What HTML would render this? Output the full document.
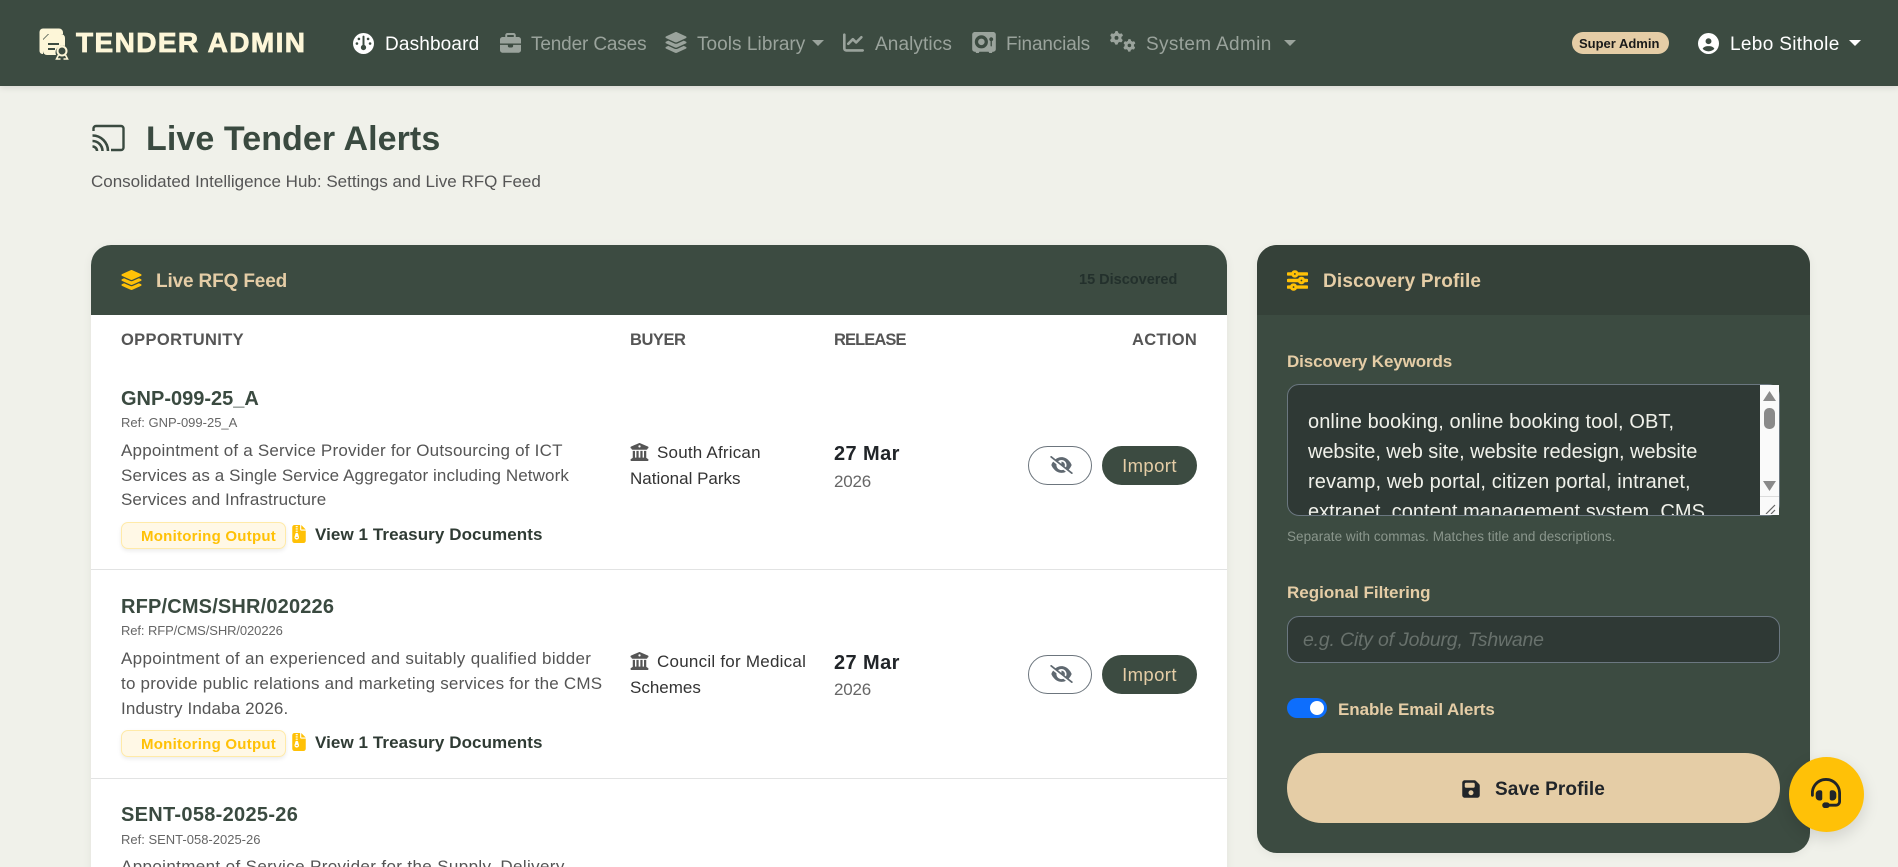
<!DOCTYPE html>
<html lang="en"><head><meta charset="utf-8"><title>Live Tender Alerts</title>
<style>
*{box-sizing:border-box;margin:0;padding:0}
html,body{width:1898px;height:867px;overflow:hidden;background:#f0f1ea;font-family:"Liberation Sans",Arial,sans-serif}
body{position:relative}
.t{position:absolute;white-space:nowrap;line-height:24px;height:24px}
svg{position:absolute;display:block;fill:currentColor}
.box{position:absolute}
header{position:absolute;left:0;top:0;width:1898px;height:86px;background:#3c4b41;box-shadow:0 2px 6px rgba(0,0,0,.1)}
.nav{font-size:19px;color:#9aa39c}
.navi{color:#9aa39c}
.caret{position:absolute;width:0;height:0;border-left:6px solid transparent;border-right:6px solid transparent;border-top:6px solid #9aa39c}
.th{font-size:16.5px;font-weight:700;color:#555}
.rt{font-size:20px;font-weight:700;color:#3a4a40}
.ref{font-size:13px;color:#666}
.d{font-size:17px;color:#555;letter-spacing:.08px}
.badge{position:absolute;left:121px;width:165px;height:27px;background:#fff8e6;border:1px solid #ffeaa8;border-radius:7px;box-shadow:0 2px 4px rgba(0,0,0,.08)}
.mo{font-size:15px;font-weight:700;color:#ffc107;letter-spacing:.25px}
.vd{font-size:17px;font-weight:700;color:#2f3b34;letter-spacing:.08px}
.b{font-size:17px;color:#333}
.dm{font-size:20px;font-weight:700;color:#212529;letter-spacing:.4px}
.yr{font-size:17px;color:#666;letter-spacing:-.2px}
.eye{position:absolute;left:1028px;width:64px;height:39px;border:1px solid #6c757d;border-radius:20px;background:#fff}
.imp{position:absolute;left:1102px;width:95px;height:39px;border-radius:20px;background:#3c4b41;color:#e5cda6;font-size:18.5px;letter-spacing:.4px;line-height:39px;text-align:center}
.lab{font-size:17px;font-weight:700;color:#e5cda6}
.kw{font-size:20px;color:#f0f1ea;height:30px;line-height:30px}
</style></head><body>

<header></header>
<svg style="left:38px;top:27px" width="31" height="33" viewBox="0 0 31 33">
<path d="M5 1.500H21a4 4 0 0 1 4 4V7H10L5 12V27H4.500a3 3 0 0 1-3-3V5a3.500 3.500 0 0 1 3.500-3.500z" fill="#fdf6d8"/>
<path d="M11 7H23a4 4 0 0 1 4 4V19a7 7 0 0 0-9 9H9a4 4 0 0 1-4-4V13z" fill="#fdf6d8"/>
<path d="M10 17H21M10 22H17" stroke="#3c4b41" stroke-width="2" fill="none"/>
<circle cx="24" cy="24" r="4.500" fill="none" stroke="#fdf6d8" stroke-width="2"/>
<path d="M20.500 28L18.500 32H22.500M27.500 28L29.500 32H25.500" fill="none" stroke="#fdf6d8" stroke-width="1.600"/>
</svg>
<span class="t" style="left:76px;top:30px;height:26px;line-height:26px;font-size:28px;font-weight:700;color:#fdf6d8;letter-spacing:1.400px;-webkit-text-stroke:.8px #fdf6d8">TENDER ADMIN</span>

<svg style="left:353px;top:33px;color:#fff" width="21" height="21" viewBox="0 0 512 512"><path d="M0 256a256 256 0 1 1 512 0A256 256 0 1 1 0 256zm320 96c0-26.900-16.500-49.900-40-59.300V88c0-13.300-10.700-24-24-24s-24 10.700-24 24V292.700c-23.500 9.500-40 32.500-40 59.300c0 35.300 28.700 64 64 64s64-28.700 64-64zM144 176a32 32 0 1 0 0-64 32 32 0 1 0 0 64zm-16 80a32 32 0 1 0 -64 0 32 32 0 1 0 64 0zm288 32a32 32 0 1 0 0-64 32 32 0 1 0 0 64zM400 144a32 32 0 1 0 -64 0 32 32 0 1 0 64 0z"/></svg>
<span class="t nav" style="left:385px;top:33px;color:#fff;letter-spacing:.15px">Dashboard</span>

<svg class="navi" style="left:500px;top:33px" width="21" height="21" viewBox="0 0 512 512"><path d="M184 48H328c4.400 0 8 3.600 8 8V96H176V56c0-4.400 3.600-8 8-8zm-56 8V96H64C28.700 96 0 124.700 0 160v96H192 320 512V160c0-35.300-28.700-64-64-64H384V56c0-30.900-25.100-56-56-56H184c-30.900 0-56 25.100-56 56zM512 288H320v32c0 17.700-14.300 32-32 32H224c-17.700 0-32-14.300-32-32V288H0V416c0 35.300 28.700 64 64 64H448c35.300 0 64-28.700 64-64V288z"/></svg>
<span class="t nav" style="left:531px;top:33px;letter-spacing:-.15px">Tender Cases</span>

<svg class="navi" style="left:664px;top:32px" width="24" height="21" viewBox="0 0 576 512"><path d="M264.500 5.200c14.900-6.900 32.100-6.900 47 0l218.600 101c8.500 3.900 13.900 12.400 13.900 21.800s-5.400 17.900-13.900 21.800l-218.600 101c-14.900 6.900-32.100 6.900-47 0L45.900 149.800C37.400 145.800 32 137.300 32 128s5.400-17.900 13.900-21.800L264.500 5.200zM476.900 209.600l53.200 24.600c8.500 3.900 13.900 12.400 13.900 21.800s-5.400 17.900-13.900 21.800l-218.600 101c-14.900 6.900-32.100 6.900-47 0L45.900 277.800C37.400 273.800 32 265.300 32 256s5.400-17.900 13.900-21.800l53.200-24.600 152 70.200c23.400 10.800 50.400 10.800 73.800 0l152-70.200zm-152 198.200l152-70.200 53.200 24.600c8.500 3.900 13.900 12.400 13.900 21.800s-5.400 17.900-13.900 21.800l-218.600 101c-14.900 6.900-32.100 6.900-47 0L45.900 405.800C37.400 401.800 32 393.300 32 384s5.400-17.900 13.900-21.800l53.200-24.600 152 70.200c23.400 10.800 50.400 10.800 73.800 0z"/></svg>
<span class="t nav" style="left:697px;top:33px;letter-spacing:.05px">Tools Library</span>
<i class="caret" style="left:812px;top:40px"></i>

<svg class="navi" style="left:843px;top:32px" width="21" height="21" viewBox="0 0 512 512"><path d="M64 64c0-17.700-14.300-32-32-32S0 46.300 0 64V400c0 44.200 35.800 80 80 80H480c17.700 0 32-14.300 32-32s-14.300-32-32-32H80c-8.800 0-16-7.200-16-16V64zm406.600 86.600c12.500-12.500 12.500-32.800 0-45.300s-32.800-12.500-45.300 0L320 210.700l-57.400-57.400c-12.500-12.500-32.800-12.500-45.300 0l-112 112c-12.500 12.500-12.500 32.800 0 45.300s32.800 12.500 45.300 0L240 221.300l57.400 57.400c12.500 12.500 32.800 12.500 45.300 0l128-128z"/></svg>
<span class="t nav" style="left:875px;top:33px;letter-spacing:.1px">Analytics</span>

<svg class="navi" style="left:972px;top:32px" width="24" height="21" viewBox="0 0 576 512"><path d="M64 0C28.700 0 0 28.700 0 64V416c0 35.300 28.700 64 64 64H80l16 32h64l16-32H400l16 32h64l16-32h16c35.300 0 64-28.700 64-64V64c0-35.300-28.700-64-64-64H64zM224 320a80 80 0 1 0 0-160 80 80 0 1 0 0 160zm0-240a160 160 0 1 1 0 320 160 160 0 1 1 0-320zM480 221.300V336c0 8.800-7.200 16-16 16s-16-7.200-16-16V221.300c-18.600-6.600-32-24.400-32-45.300c0-26.500 21.500-48 48-48s48 21.500 48 48c0 20.900-13.400 38.700-32 45.300z"/></svg>
<span class="t nav" style="left:1006px;top:33px;letter-spacing:-.15px">Financials</span>

<svg class="navi" style="left:1110px;top:31px" width="26" height="21" viewBox="0 0 640 512">
<path d="M308.500 135.300c7.100-6.300 9.900-16.200 6.200-25c-2.300-5.300-4.800-10.500-7.600-15.500L304 89.400c-3-5-6.300-9.900-9.800-14.600c-5.700-7.600-15.700-10.100-24.700-7.100l-28.200 9.300c-10.700-8.800-23-16-36.200-20.900L198 27.100c-1.900-9.300-9.100-16.700-18.500-17.800C173.900 8.400 168.200 8 162.400 8h-.7c-5.800 0-11.500 .4-17.100 1.200c-9.400 1.200-16.600 8.600-18.500 17.900L120 56.100c-13.300 5-25.500 12.100-36.200 20.900L55.500 67.800c-9-3-19-.5-24.700 7.100c-3.500 4.700-6.800 9.600-9.900 14.600l-3 5.300c-2.800 5-5.300 10.200-7.600 15.600c-3.700 8.700-.9 18.600 6.200 25l22.200 19.800C32.600 161.900 32 168.900 32 176s.6 14.100 1.700 20.900L11.500 216.700c-7.100 6.300-9.900 16.200-6.200 25c2.300 5.300 4.800 10.500 7.600 15.600l3 5.200c3 5.100 6.300 9.900 9.900 14.600c5.700 7.600 15.700 10.100 24.700 7.100l28.200-9.300c10.700 8.800 23 16 36.200 20.900l6.100 29.100c1.900 9.300 9.100 16.700 18.500 17.800c5.700 .7 11.500 1.100 17.400 1.100s11.700-.4 17.400-1.100c9.400-1.200 16.600-8.600 18.500-17.800l6.100-29.100c13.300-5 25.500-12.100 36.200-20.900l28.200 9.300c9 3 19 .5 24.700-7.100c3.500-4.700 6.800-9.500 9.800-14.600l3.100-5.400c2.800-5 5.300-10.200 7.600-15.500c3.700-8.700 .9-18.600-6.200-25l-22.200-19.800c1.100-6.800 1.700-13.800 1.700-20.900s-.6-14.100-1.700-20.900l22.200-19.800zM112 176a48 48 0 1 1 96 0 48 48 0 1 1 -96 0z" transform="translate(0 -10)"/>
<path d="M308.500 135.300c7.100-6.300 9.900-16.200 6.200-25c-2.300-5.300-4.800-10.500-7.600-15.500L304 89.400c-3-5-6.300-9.900-9.800-14.600c-5.700-7.600-15.700-10.100-24.700-7.100l-28.200 9.300c-10.700-8.800-23-16-36.200-20.900L198 27.100c-1.900-9.300-9.100-16.700-18.500-17.800C173.900 8.400 168.200 8 162.400 8h-.7c-5.800 0-11.500 .4-17.100 1.200c-9.400 1.200-16.600 8.600-18.500 17.900L120 56.100c-13.300 5-25.500 12.100-36.200 20.900L55.500 67.800c-9-3-19-.5-24.700 7.100c-3.500 4.700-6.800 9.600-9.900 14.600l-3 5.300c-2.800 5-5.300 10.200-7.600 15.600c-3.700 8.700-.9 18.600 6.200 25l22.200 19.800C32.600 161.900 32 168.900 32 176s.6 14.100 1.700 20.900L11.500 216.700c-7.100 6.300-9.900 16.200-6.200 25c2.300 5.300 4.800 10.500 7.600 15.600l3 5.200c3 5.100 6.300 9.900 9.900 14.600c5.700 7.600 15.700 10.100 24.700 7.100l28.200-9.300c10.700 8.800 23 16 36.200 20.900l6.100 29.100c1.900 9.300 9.100 16.700 18.500 17.800c5.700 .7 11.500 1.100 17.400 1.100s11.700-.4 17.400-1.100c9.400-1.200 16.600-8.600 18.500-17.800l6.100-29.100c13.300-5 25.500-12.100 36.200-20.900l28.200 9.300c9 3 19 .5 24.700-7.100c3.500-4.700 6.800-9.500 9.800-14.600l3.100-5.400c2.800-5 5.300-10.200 7.600-15.500c3.700-8.700 .9-18.600-6.200-25l-22.200-19.800c1.100-6.800 1.700-13.800 1.700-20.900s-.6-14.100-1.700-20.900l22.200-19.800zM112 176a48 48 0 1 1 96 0 48 48 0 1 1 -96 0z" transform="translate(330 190) scale(.92)"/></svg>
<span class="t nav" style="left:1146px;top:33px;letter-spacing:.35px">System Admin</span>
<i class="caret" style="left:1284px;top:40px"></i>

<div class="box" style="left:1572px;top:32px;width:97px;height:22px;border-radius:11px;background:#e5cda6"></div>
<span class="t" style="left:1579px;top:32px;font-size:13px;font-weight:700;color:#1a1a1a">Super Admin</span>
<svg style="left:1698px;top:33px;color:#fff" width="21" height="21" viewBox="0 0 512 512"><path d="M399 384.200C376.900 345.800 335.400 320 288 320H224c-47.400 0-88.900 25.800-111 64.200c35.200 39.200 86.200 63.800 143 63.800s107.800-24.700 143-63.800zM0 256a256 256 0 1 1 512 0A256 256 0 1 1 0 256zm256 16a72 72 0 1 0 0-144 72 72 0 1 0 0 144z"/></svg>
<span class="t nav" style="left:1730px;top:33px;color:#fff;letter-spacing:.33px">Lebo Sithole</span>
<i class="caret" style="left:1849px;top:40px;border-top-color:#fff"></i>

<svg style="left:91px;top:124px;color:#3a4a40;fill:none" width="34" height="28" viewBox="0 0 34 28">
<path d="M2.500 7V4.500a2.500 2.500 0 0 1 2.500-2.500H30a2.500 2.500 0 0 1 2.500 2.500V23.500a2.500 2.500 0 0 1-2.500 2.500H20" fill="none" stroke="currentColor" stroke-width="2.400"/>
<path d="M1.500 11.500a15.500 15.500 0 0 1 15.500 15.500M1.500 17a10 10 0 0 1 10 10M1.500 22.500a4.500 4.500 0 0 1 4.500 4.500" fill="none" stroke="currentColor" stroke-width="2.600"/></svg>
<h1 class="t" style="left:146px;top:122px;height:34px;line-height:34px;font-size:34px;font-weight:700;color:#3a4a40;letter-spacing:.08px">Live Tender Alerts</h1>
<p class="t" style="left:91px;top:170px;font-size:17px;color:#555;letter-spacing:0">Consolidated Intelligence Hub: Settings and Live RFQ Feed</p>

<!-- left card -->
<div class="box" style="left:91px;top:245px;width:1136px;height:640px;background:#fff;border-radius:20px 20px 0 0;box-shadow:0 2px 10px rgba(0,0,0,.06)"></div>
<div class="box" style="left:91px;top:245px;width:1136px;height:70px;background:#3c4b41;border-radius:20px 20px 0 0"></div>
<svg style="left:120px;top:270px;color:#ffc107" width="23" height="20" viewBox="0 0 576 512"><path d="M264.500 5.200c14.900-6.900 32.100-6.900 47 0l218.600 101c8.500 3.900 13.900 12.400 13.900 21.800s-5.400 17.900-13.900 21.800l-218.600 101c-14.900 6.900-32.100 6.900-47 0L45.900 149.800C37.400 145.800 32 137.300 32 128s5.400-17.900 13.900-21.800L264.500 5.200zM476.900 209.600l53.200 24.600c8.500 3.900 13.900 12.400 13.900 21.800s-5.400 17.900-13.900 21.800l-218.600 101c-14.900 6.900-32.100 6.900-47 0L45.900 277.800C37.400 273.800 32 265.300 32 256s5.400-17.900 13.900-21.800l53.200-24.600 152 70.200c23.400 10.800 50.400 10.800 73.800 0l152-70.200zm-152 198.200l152-70.200 53.200 24.600c8.500 3.900 13.900 12.400 13.900 21.800s-5.400 17.900-13.900 21.800l-218.600 101c-14.900 6.900-32.100 6.900-47 0L45.900 405.800C37.400 401.800 32 393.300 32 384s5.400-17.900 13.900-21.800l53.200-24.600 152 70.200c23.400 10.800 50.400 10.800 73.800 0z"/></svg>
<span class="t" style="left:156px;top:270px;font-size:19px;font-weight:700;color:#e5cda6;letter-spacing:-.15px">Live RFQ Feed</span>
<span class="t" style="left:1079px;top:268px;font-size:14.500px;font-weight:700;color:#23302c">15 Discovered</span>

<span class="t th" style="left:121px;top:328px;letter-spacing:.35px">OPPORTUNITY</span>
<span class="t th" style="left:630px;top:328px;letter-spacing:-.45px">BUYER</span>
<span class="t th" style="left:834px;top:328px;letter-spacing:-.9px">RELEASE</span>
<span class="t th" style="left:1132px;top:328px;letter-spacing:.3px">ACTION</span>

<!-- row 1 -->
<span class="t rt" style="left:121px;top:387px;letter-spacing:0">GNP-099-25_A</span>
<span class="t ref" style="left:121px;top:411px">Ref: GNP-099-25_A</span>
<span class="t d" style="left:121px;top:439px;letter-spacing:.21px">Appointment of a Service Provider for Outsourcing of ICT</span>
<span class="t d" style="left:121px;top:464px;letter-spacing:.1px">Services as a Single Service Aggregator including Network</span>
<span class="t d" style="left:121px;top:488px">Services and Infrastructure</span>
<div class="badge" style="top:522px"></div>
<span class="t mo" style="left:141px;top:525px">Monitoring Output</span>
<svg style="left:292px;top:525px;color:#ffc107" width="14" height="18" viewBox="0 0 384 512"><path d="M64 0C28.700 0 0 28.700 0 64V448c0 35.300 28.700 64 64 64H320c35.300 0 64-28.700 64-64V160H256c-17.700 0-32-14.300-32-32V0H64zM256 0V128H384L256 0zM96 48c0-8.800 7.200-16 16-16h32c8.800 0 16 7.200 16 16s-7.200 16-16 16H112c-8.800 0-16-7.200-16-16zm0 64c0-8.800 7.200-16 16-16h32c8.800 0 16 7.200 16 16s-7.200 16-16 16H112c-8.800 0-16-7.200-16-16zm0 64c0-8.800 7.200-16 16-16h32c8.800 0 16 7.200 16 16s-7.200 16-16 16H112c-8.800 0-16-7.200-16-16zm-6.300 71.800c3.700-14 16.400-23.800 30.900-23.800h14.800c14.500 0 27.200 9.700 30.900 23.800l23.500 88.200c1.400 5.400 2.100 10.900 2.100 16.400c0 35.200-28.800 63.700-64 63.700s-64-28.500-64-63.700c0-5.500 .7-11.100 2.100-16.400l23.500-88.200zM112 336c-8.800 0-16 7.200-16 16s7.200 16 16 16h32c8.800 0 16-7.200 16-16s-7.200-16-16-16H112z"/></svg>
<span class="t vd" style="left:315px;top:523px">View 1 Treasury Documents</span>
<svg style="left:630px;top:443px;color:#555" width="19" height="18" viewBox="0 0 512 512"><path d="M243.400 2.600l-224 96c-14 6-21.800 21-18.700 35.800S16.800 160 32 160v8c0 13.300 10.700 24 24 24H456c13.300 0 24-10.700 24-24v-8c15.200 0 28.300-10.700 31.300-25.600s-4.800-29.900-18.700-35.800l-224-96c-8-3.400-17.200-3.400-25.200 0zM128 224H64V420.300c-.6 .3-1.200 .7-1.800 1.100l-48 32c-11.700 7.800-17 22.400-12.900 35.900S17.900 512 32 512H480c14.100 0 26.500-9.200 30.600-22.700s-1.100-28.100-12.900-35.900l-48-32c-.6-.4-1.200-.7-1.800-1.100V224H384V416H344V224H280V416H232V224H168V416H128V224zM256 64a32 32 0 1 1 0 64 32 32 0 1 1 0-64z"/></svg>
<span class="t b" style="left:657px;top:441px;letter-spacing:.2px">South African</span>
<span class="t b" style="left:630px;top:467px">National Parks</span>
<span class="t dm" style="left:834px;top:442px">27 Mar</span>
<span class="t yr" style="left:834px;top:470px">2026</span>
<div class="eye" style="top:446px"></div>
<svg style="left:1050px;top:456px;color:#5f6870" width="23" height="18" viewBox="0 0 640 512"><path d="M38.800 5.100C28.400-3.100 13.300-1.200 5.100 9.200S-1.200 34.700 9.200 42.900l592 464c10.400 8.200 25.500 6.300 33.700-4.100s6.300-25.500-4.100-33.700L525.600 386.700c39.600-40.600 66.400-86.100 79.900-118.400c3.300-7.900 3.300-16.700 0-24.600c-14.900-35.700-46.200-87.700-93-131.100C465.500 68.800 400.800 32 320 32c-68.200 0-125 26.300-169.300 60.800L38.800 5.100zM223.100 149.500C248.600 126.200 282.700 112 320 112c79.500 0 144 64.500 144 144c0 24.900-6.300 48.300-17.400 68.700L408 294.500c8.400-19.300 10.600-41.400 4.800-63.300c-11.100-41.500-47.800-69.400-88.600-71.100c-5.800-.2-9.200 6.100-7.400 11.700c2.100 6.400 3.300 13.200 3.300 20.300c0 10.200-2.400 19.800-6.600 28.300l-90.300-70.800zM373 389.900c-16.400 6.500-34.300 10.100-53 10.100c-79.500 0-144-64.500-144-144c0-6.900 .5-13.600 1.400-20.200L83.100 161.500C60.300 191.200 44 220.800 34.500 243.700c-3.300 7.900-3.300 16.700 0 24.600c14.900 35.700 46.200 87.700 93 131.100C174.500 443.200 239.200 480 320 480c47.800 0 89.900-12.900 126.200-32.500L373 389.900z"/></svg>
<div class="imp" style="top:446px">Import</div>
<div class="box" style="left:91px;top:569px;width:1136px;height:1px;background:#e2e3e3"></div>

<!-- row 2 -->
<span class="t rt" style="left:121px;top:595px;letter-spacing:.17px">RFP/CMS/SHR/020226</span>
<span class="t ref" style="left:121px;top:619px;letter-spacing:-.1px">Ref: RFP/CMS/SHR/020226</span>
<span class="t d" style="left:121px;top:647px;letter-spacing:.33px">Appointment of an experienced and suitably qualified bidder</span>
<span class="t d" style="left:121px;top:672px;letter-spacing:.22px">to provide public relations and marketing services for the CMS</span>
<span class="t d" style="left:121px;top:697px;letter-spacing:.14px">Industry Indaba 2026.</span>
<div class="badge" style="top:730px"></div>
<span class="t mo" style="left:141px;top:733px">Monitoring Output</span>
<svg style="left:292px;top:733px;color:#ffc107" width="14" height="18" viewBox="0 0 384 512"><path d="M64 0C28.700 0 0 28.700 0 64V448c0 35.300 28.700 64 64 64H320c35.300 0 64-28.700 64-64V160H256c-17.700 0-32-14.300-32-32V0H64zM256 0V128H384L256 0zM96 48c0-8.800 7.200-16 16-16h32c8.800 0 16 7.200 16 16s-7.200 16-16 16H112c-8.800 0-16-7.200-16-16zm0 64c0-8.800 7.200-16 16-16h32c8.800 0 16 7.200 16 16s-7.200 16-16 16H112c-8.800 0-16-7.200-16-16zm0 64c0-8.800 7.200-16 16-16h32c8.800 0 16 7.200 16 16s-7.200 16-16 16H112c-8.800 0-16-7.200-16-16zm-6.300 71.800c3.700-14 16.400-23.800 30.900-23.800h14.800c14.500 0 27.200 9.700 30.900 23.800l23.500 88.200c1.400 5.400 2.100 10.900 2.100 16.400c0 35.200-28.800 63.700-64 63.700s-64-28.500-64-63.700c0-5.500 .7-11.100 2.100-16.400l23.500-88.200zM112 336c-8.800 0-16 7.200-16 16s7.200 16 16 16h32c8.800 0 16-7.200 16-16s-7.200-16-16-16H112z"/></svg>
<span class="t vd" style="left:315px;top:731px">View 1 Treasury Documents</span>
<svg style="left:630px;top:652px;color:#555" width="19" height="18" viewBox="0 0 512 512"><path d="M243.400 2.600l-224 96c-14 6-21.800 21-18.700 35.800S16.800 160 32 160v8c0 13.300 10.700 24 24 24H456c13.300 0 24-10.700 24-24v-8c15.200 0 28.300-10.700 31.300-25.600s-4.800-29.900-18.700-35.800l-224-96c-8-3.400-17.200-3.400-25.200 0zM128 224H64V420.300c-.6 .3-1.200 .7-1.800 1.100l-48 32c-11.700 7.800-17 22.400-12.900 35.900S17.900 512 32 512H480c14.100 0 26.500-9.200 30.600-22.700s-1.100-28.100-12.900-35.900l-48-32c-.6-.4-1.200-.7-1.800-1.100V224H384V416H344V224H280V416H232V224H168V416H128V224zM256 64a32 32 0 1 1 0 64 32 32 0 1 1 0-64z"/></svg>
<span class="t b" style="left:657px;top:650px;letter-spacing:.24px">Council for Medical</span>
<span class="t b" style="left:630px;top:676px">Schemes</span>
<span class="t dm" style="left:834px;top:651px">27 Mar</span>
<span class="t yr" style="left:834px;top:678px">2026</span>
<div class="eye" style="top:655px"></div>
<svg style="left:1050px;top:665px;color:#5f6870" width="23" height="18" viewBox="0 0 640 512"><path d="M38.800 5.100C28.400-3.100 13.300-1.200 5.100 9.200S-1.200 34.700 9.200 42.900l592 464c10.400 8.200 25.500 6.300 33.700-4.100s6.300-25.500-4.100-33.700L525.600 386.700c39.600-40.600 66.400-86.100 79.900-118.400c3.300-7.900 3.300-16.700 0-24.600c-14.900-35.700-46.200-87.700-93-131.100C465.500 68.800 400.800 32 320 32c-68.200 0-125 26.300-169.300 60.800L38.800 5.100zM223.100 149.500C248.600 126.200 282.700 112 320 112c79.500 0 144 64.500 144 144c0 24.900-6.300 48.300-17.400 68.700L408 294.500c8.400-19.300 10.600-41.400 4.800-63.300c-11.100-41.500-47.800-69.400-88.600-71.100c-5.800-.2-9.200 6.100-7.400 11.700c2.100 6.400 3.300 13.200 3.300 20.300c0 10.200-2.400 19.800-6.600 28.300l-90.300-70.800zM373 389.900c-16.400 6.500-34.300 10.100-53 10.100c-79.500 0-144-64.500-144-144c0-6.900 .5-13.600 1.400-20.200L83.100 161.500C60.300 191.200 44 220.800 34.500 243.700c-3.300 7.900-3.300 16.700 0 24.600c14.900 35.700 46.200 87.700 93 131.100C174.500 443.200 239.200 480 320 480c47.800 0 89.900-12.900 126.200-32.500L373 389.900z"/></svg>
<div class="imp" style="top:655px">Import</div>
<div class="box" style="left:91px;top:778px;width:1136px;height:1px;background:#e2e3e3"></div>

<!-- row 3 -->
<span class="t rt" style="left:121px;top:803px;letter-spacing:.3px">SENT-058-2025-26</span>
<span class="t ref" style="left:121px;top:828px">Ref: SENT-058-2025-26</span>
<span class="t d" style="left:121px;top:855px;letter-spacing:.37px">Appointment of Service Provider for the Supply, Delivery</span>

<!-- right card -->
<div class="box" style="left:1257px;top:245px;width:553px;height:608px;background:#3c4b41;border-radius:20px;box-shadow:0 2px 10px rgba(0,0,0,.06)"></div>
<div class="box" style="left:1257px;top:245px;width:553px;height:70px;background:#354139;border-radius:20px 20px 0 0"></div>
<svg style="left:1287px;top:270px;color:#ffc107;stroke:#ffc107;stroke-width:20" width="21" height="21" viewBox="0 0 512 512"><path d="M0 416c0 17.700 14.300 32 32 32l54.700 0c12.300 28.300 40.500 48 73.300 48s61-19.700 73.300-48L480 448c17.700 0 32-14.300 32-32s-14.300-32-32-32l-246.700 0c-12.300-28.300-40.500-48-73.300-48s-61 19.700-73.300 48L32 384c-17.700 0-32 14.300-32 32zm128 0a32 32 0 1 1 64 0 32 32 0 1 1 -64 0zM320 256a32 32 0 1 1 64 0 32 32 0 1 1 -64 0zm32-80c-32.800 0-61 19.700-73.300 48L32 224c-17.700 0-32 14.300-32 32s14.300 32 32 32l246.700 0c12.300 28.300 40.500 48 73.300 48s61-19.700 73.300-48l54.700 0c17.700 0 32-14.300 32-32s-14.300-32-32-32l-54.700 0c-12.300-28.300-40.500-48-73.300-48zM192 128a32 32 0 1 1 0-64 32 32 0 1 1 0 64zm73.300-64C253 35.700 224.800 16 192 16s-61 19.700-73.300 48L32 64C14.300 64 0 78.300 0 96s14.300 32 32 32l86.700 0c12.300 28.300 40.500 48 73.300 48s61-19.700 73.300-48L480 128c17.700 0 32-14.300 32-32s-14.300-32-32-32L265.300 64z"/></svg>
<span class="t" style="left:1323px;top:270px;font-size:19px;font-weight:700;color:#e5cda6;letter-spacing:.17px">Discovery Profile</span>

<span class="t lab" style="left:1287px;top:350px;letter-spacing:-.12px">Discovery Keywords</span>
<div class="box" style="left:1287px;top:384px;width:493px;height:132px;background:#2f3935;border:1px solid #6b7780;border-radius:12px;overflow:hidden">
<span class="t kw" style="left:20px;top:22px;letter-spacing:.09px">online booking, online booking tool, OBT,</span>
<span class="t kw" style="left:20px;top:52px;letter-spacing:-.07px">website, web site, website redesign, website</span>
<span class="t kw" style="left:20px;top:82px;letter-spacing:.13px">revamp, web portal, citizen portal, intranet,</span>
<span class="t kw" style="left:20px;top:112px;letter-spacing:.03px">extranet, content management system, CMS,</span>
</div>
<div class="box" style="left:1760px;top:385px;width:19px;height:130px;background:#fafafa"></div>
<svg style="left:1763px;top:391px" width="13" height="10" viewBox="0 0 13 10"><path d="M6.500 0L13 10H0z" fill="#8a8a8a"/></svg>
<div class="box" style="left:1764px;top:408px;width:11px;height:21px;border-radius:5px;background:#8a8a8a"></div>
<svg style="left:1763px;top:481px" width="13" height="10" viewBox="0 0 13 10"><path d="M6.500 10L13 0H0z" fill="#8a8a8a"/></svg>
<div class="box" style="left:1760px;top:496px;width:19px;height:1px;background:#dcdcdc"></div>
<svg style="left:1765px;top:504px" width="12" height="10" viewBox="0 0 12 10"><path d="M1 10L10 1M6 10L10 6" stroke="#666" stroke-width="1.200" fill="none"/></svg>
<span class="t" style="left:1287px;top:525px;font-size:13.500px;color:#8a968c;letter-spacing:.04px">Separate with commas. Matches title and descriptions.</span>

<span class="t lab" style="left:1287px;top:581px">Regional Filtering</span>
<div class="box" style="left:1287px;top:616px;width:493px;height:47px;background:#2f3935;border:1px solid #6b7780;border-radius:12px"></div>
<span class="t" style="left:1303px;top:628px;font-size:19.500px;font-style:italic;color:#68716c;letter-spacing:-.2px">e.g. City of Joburg, Tshwane</span>

<div class="box" style="left:1287px;top:698px;width:40px;height:20px;border-radius:10px;background:#0d6efd"></div>
<div class="box" style="left:1310px;top:701px;width:14px;height:14px;border-radius:50%;background:#fff"></div>
<span class="t lab" style="left:1338px;top:698px;letter-spacing:-.07px">Enable Email Alerts</span>

<div class="box" style="left:1287px;top:753px;width:493px;height:70px;border-radius:35px;background:#e5cda6"></div>
<svg style="left:1462px;top:779px;color:#212529" width="18" height="20" viewBox="0 0 448 512"><path d="M64 32C28.700 32 0 60.700 0 96V416c0 35.300 28.700 64 64 64H384c35.300 0 64-28.700 64-64V173.300c0-17-6.700-33.300-18.700-45.300L352 50.700C340 38.700 323.700 32 306.700 32H64zm0 96c0-17.700 14.300-32 32-32H288c17.700 0 32 14.300 32 32v64c0 17.700-14.300 32-32 32H96c-17.700 0-32-14.300-32-32V128zM224 288a64 64 0 1 1 0 128 64 64 0 1 1 0-128z"/></svg>
<span class="t" style="left:1495px;top:778px;font-size:19px;font-weight:700;color:#212529;letter-spacing:.1px">Save Profile</span>

<div class="box" style="left:1789px;top:757px;width:75px;height:75px;border-radius:50%;background:#ffc107;box-shadow:0 6px 16px rgba(0,0,0,.13)"></div>
<svg style="left:1811px;top:778px;color:#212529" width="30" height="30" viewBox="0 0 512 512"><path d="M256 48C141.100 48 48 141.100 48 256v40c0 13.300-10.700 24-24 24s-24-10.700-24-24V256C0 114.600 114.600 0 256 0S512 114.600 512 256V400.100c0 48.600-39.400 88-88.100 88L313.600 488c-8.300 14.300-23.800 24-41.600 24H240c-26.500 0-48-21.500-48-48s21.500-48 48-48h32c17.800 0 33.300 9.700 41.600 24l110.400 .1c22.100 0 40-17.900 40-40V256c0-114.900-93.100-208-208-208zM144 208h16c17.700 0 32 14.300 32 32V352c0 17.700-14.300 32-32 32H144c-35.300 0-64-28.700-64-64V272c0-35.300 28.700-64 64-64zm224 0c35.300 0 64 28.700 64 64v48c0 35.300-28.700 64-64 64H352c-17.700 0-32-14.300-32-32V240c0-17.700 14.300-32 32-32h16z"/></svg>
</body></html>
